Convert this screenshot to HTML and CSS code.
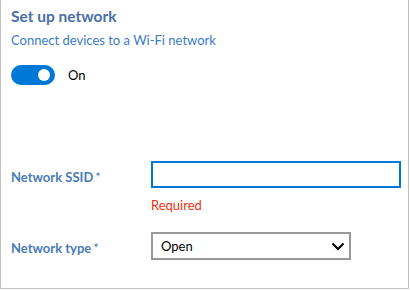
FILE: index.html
```html
<!DOCTYPE html>
<html lang="en">
<head>
    <meta charset="UTF-8">
    <title>Set up network</title>
    <link rel="stylesheet" href="styles.css">
</head>
<body>
    <div class="panel">
        <div class="panel_title">Set up network</div>
        <div class="panel_sub">Connect devices to a Wi-Fi network</div>

        <div class="toggle_row">
            <div class="toggle on"><div class="toggle_knob"></div></div>
            <span class="toggle_text">On</span>
        </div>

        <div class="form">
            <label class="form_label" for="ssid">Network SSID<span class="req">*</span></label>
            <div class="form_field">
                <input id="ssid" class="form_input" type="text">
                <div class="form_error">Required</div>
            </div>

            <label class="form_label" for="type">Network type<span class="req">*</span></label>
            <div class="form_field">
                <div class="form_select" id="type">
                    <span>Open</span>
                    <svg class="chevron" width="14" height="9" viewBox="0 0 14 9">
                        <path d="M1.5 1.5 L7 7 L12.5 1.5" fill="none" stroke="#000" stroke-width="2"/>
                    </svg>
                </div>
            </div>
        </div>
    </div>
</body>
</html>
```

FILE: styles.css
```css
*{
    margin: 0;
    padding: 0;
    box-sizing: border-box;
}
body{
    background: #fff;
    font-family: Lato, "Liberation Sans", sans-serif;
}
.panel{
    width: 409px;
    height: 289px;
    border: 1px solid #c2c2c2;
    border-top: none;
    padding: 6px 0 0 10px;
}
.panel_title{
    font-size: 15.5px;
    font-weight: bold;
    color: #4a6fa8;
    line-height: 20px;
}
.panel_sub{
    font-size: 13px;
    color: #3a7cc7;
    line-height: 18px;
    margin-top: 5px;
}
.toggle_row{
    display: flex;
    align-items: center;
    gap: 13px;
    margin-top: 16px;
}
.toggle{
    width: 44px;
    height: 20px;
    border-radius: 10px;
    background: #0078d7;
    position: relative;
}
.toggle_knob{
    position: absolute;
    width: 12px;
    height: 12px;
    border-radius: 6px;
    background: #fff;
    top: 4px;
    right: 5px;
}
.toggle_text{
    font-size: 13px;
    color: #000;
}
.form{
    display: grid;
    grid-template-columns: 140px 250px;
    row-gap: 18px;
    margin-top: 76px;
}
.form_label{
    font-size: 13px;
    font-weight: bold;
    color: #4a7cb8;
    line-height: 27px;
    padding-top: 3px;
}
.req{
    margin-left: 2px;
    font-weight: normal;
}
.form_input{
    display: block;
    width: 250px;
    height: 27px;
    border: 1px solid #0078d7;
    outline: 1px solid #0078d7;
    outline-offset: -2px;
    background: #fff;
}
.form_error{
    font-size: 13px;
    color: #f0300f;
    line-height: 18px;
    margin-top: 8px;
}
.form_select{
    width: 200px;
    height: 28px;
    border: 1px solid #999;
    outline: 1px solid #999;
    outline-offset: -2px;
    display: flex;
    align-items: center;
    justify-content: space-between;
    padding: 0 5px 0 9px;
    font-size: 13px;
    color: #000;
}
```
